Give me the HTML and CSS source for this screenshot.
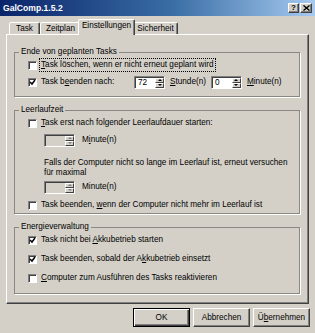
FILE: index.html
```html
<!DOCTYPE html>
<html lang="de">
<head>
<meta charset="utf-8">
<title>GalComp.1.5.2</title>
<link rel="stylesheet" href="styles.css">
</head>
<body>
<div class="dialog">
  <div class="titlebar">
    <span class="title">GalComp.1.5.2</span>
    <div class="tbtns">
      <span class="tbtn">?</span>
      <span class="tbtn close"><svg width="7" height="6" viewBox="0 0 7 6"><path d="M0.5 0.5 L6.5 5.5 M6.5 0.5 L0.5 5.5" stroke="#000" stroke-width="1.4"/></svg></span>
    </div>
  </div>
  <div class="tabs">
    <div class="tab t-task">Task</div>
    <div class="tab t-zeit">Zeitplan</div>
    <div class="tab active t-einst">Einstellungen</div>
    <div class="tab t-sich">Sicherheit</div>
  </div>
  <div class="panel">
    <fieldset class="group g1">
      <legend>Ende von geplanten Tasks</legend>
      <div class="row">
        <span class="cb"></span>
        <span class="focus"><u>T</u>ask löschen, wenn er nicht erneut geplant wird</span>
      </div>
      <div class="row r2">
        <span class="cb"><svg viewBox="0 0 7 7" width="7" height="7"><path d="M1 3 L3 5 L6 1" fill="none" stroke="#000" stroke-width="1.5"/></svg></span>
        <span class="lbl-w">Task b<u>e</u>enden nach:</span>
        <span class="spin"><span class="val">72</span><span class="arrows"><span><i class="up"></i></span><span><i class="down"></i></span></span></span>
        <span class="unit"><u>S</u>tunde(n)</span>
        <span class="spin"><span class="val">0</span><span class="arrows"><span><i class="up"></i></span><span><i class="down"></i></span></span></span>
        <span class="unit"><u>M</u>inute(n)</span>
      </div>
    </fieldset>

    <fieldset class="group g2">
      <legend>Leerlaufzeit</legend>
      <div class="row">
        <span class="cb"></span>
        <span><u>T</u>ask erst nach folgender Leerlaufdauer starten:</span>
      </div>
      <div class="row indent sp1">
        <span class="spin off"><span class="val"></span><span class="arrows"><span><i class="up"></i></span><span><i class="down"></i></span></span></span>
        <span class="unit2">M<u>i</u>nute(n)</span>
      </div>
      <p class="note">Falls der Computer nicht so lange im Leerlauf ist, erneut versuchen<br>für maximal</p>
      <div class="row indent sp2">
        <span class="spin off"><span class="val"></span><span class="arrows"><span><i class="up"></i></span><span><i class="down"></i></span></span></span>
        <span class="unit2">Minute(n)</span>
      </div>
      <div class="row r-last">
        <span class="cb"></span>
        <span>Task beenden, <u>w</u>enn der Computer nicht mehr im Leerlauf ist</span>
      </div>
    </fieldset>

    <fieldset class="group g3">
      <legend>Energieverwaltung</legend>
      <div class="row">
        <span class="cb"><svg viewBox="0 0 7 7" width="7" height="7"><path d="M1 3 L3 5 L6 1" fill="none" stroke="#000" stroke-width="1.5"/></svg></span>
        <span>Task nicht bei <u>A</u>kkubetrieb starten</span>
      </div>
      <div class="row r-b">
        <span class="cb"><svg viewBox="0 0 7 7" width="7" height="7"><path d="M1 3 L3 5 L6 1" fill="none" stroke="#000" stroke-width="1.5"/></svg></span>
        <span>Task beenden, sobald der A<u>k</u>kubetrieb einsetzt</span>
      </div>
      <div class="row r-c">
        <span class="cb"></span>
        <span><u>C</u>omputer zum Ausführen des Tasks reaktivieren</span>
      </div>
    </fieldset>
  </div>
  <div class="buttons">
    <div class="btn default">OK</div>
    <div class="btn">Abbrechen</div>
    <div class="btn">Ü<u>b</u>ernehmen</div>
  </div>
</div>
</body>
</html>
```

FILE: styles.css
```css
* { box-sizing: border-box; }
html, body { margin: 0; padding: 0; }
body {
  background: #d4d0c8;
  font-family: "Liberation Sans", Arial, sans-serif;
  font-size: 8.2px;
  line-height: 10px;
  color: #000;
}
u { text-underline-offset: 1px; }

.dialog {
  width: 315px;
  height: 333px;
  background: #d4d0c8;
  display: flex;
  flex-direction: column;
}

.titlebar {
  height: 16px;
  flex: none;
  background: linear-gradient(to right, #0a246a 0%, #3a6ea5 55%, #a6caf0 100%);
  display: flex;
  align-items: center;
  justify-content: space-between;
  padding: 0 3px 0 3px;
}
.title { color: #fff; font-weight: bold; font-size: 8.6px; }
.tbtns { display: flex; gap: 1px; }
.tbtn {
  width: 11px;
  height: 10px;
  background: #d4d0c8;
  border: 1px solid;
  border-color: #fff #404040 #404040 #fff;
  box-shadow: inset -1px -1px 0 #808080;
  display: flex;
  align-items: center;
  justify-content: center;
  font-size: 8px;
  font-weight: bold;
  line-height: 8px;
}
.tbtn.close { width: 12px; }

.tabs {
  height: 18px;
  flex: none;
  display: flex;
  align-items: flex-end;
  padding-left: 9px;
}
.tab {
  height: 12px;
  border: 1px solid;
  border-bottom: none;
  border-color: #fff #404040 transparent #fff;
  border-radius: 2px 2px 0 0;
  box-shadow: inset -1px 0 0 #808080;
  display: flex;
  align-items: center;
  justify-content: center;
  padding-top: 1px;
  background: #d4d0c8;
}
.t-task { width: 31px; }
.t-zeit { width: 40px; border-right: none; box-shadow: none; }
.t-einst { width: 57px; }
.t-sich { width: 45px; }
.tab.active {
  height: 16px;
  margin: 0 -2px -1px -2px;
  position: relative;
  z-index: 1;
  padding-top: 0;
  padding-bottom: 3px;
}

.panel {
  margin-left: 6px;
  width: 303px;
  height: 270px;
  flex: none;
  border: 1px solid;
  border-color: #fff #404040 #404040 #fff;
  box-shadow: inset -1px -1px 0 #808080;
  padding: 0 8px 0 7px;
  display: flex;
  flex-direction: column;
}

.group {
  margin: 0;
  min-width: 0;
  border: 1px solid #8a8883;
  box-shadow: 1px 1px 0 #fff;
  padding: 1px 0 7px 0;
}
.group legend {
  padding: 0 2px;
  margin-left: 4px;
  height: 10px;
  line-height: 10px;
}
.g1 { margin-top: 12px; }
.g2 { margin-top: 8px; padding-bottom: 1px; }
.g3 { margin-top: 8px; padding-bottom: 8px; }

.row {
  height: 14px;
  display: flex;
  align-items: center;
  padding-left: 13px;
}
.r2 { margin-top: 3px; }
.indent { padding-left: 29px; }
.sp1 { margin-top: 3px; }
.sp2 { margin-top: 2px; }
.r-last { margin-top: 4px; }
.r-b { margin-top: 5px; }
.r-c { margin-top: 5px; }

.note {
  margin: 11px 0 0 29px;
  line-height: 10px;
}

.cb {
  width: 9px;
  height: 9px;
  flex: none;
  background: #fff;
  border: 1px solid;
  border-color: #808080 #fff #fff #808080;
  box-shadow: inset 1px 1px 0 #404040;
  margin-right: 4px;
  display: flex;
  align-items: center;
  justify-content: center;
}
.cb svg { display: block; }

.focus {
  outline: 1px dotted #000;
  outline-offset: 1px;
}

.lbl-w { width: 93px; flex: none; }

.spin {
  width: 31px;
  height: 13px;
  flex: none;
  display: flex;
  border: 1px solid;
  border-color: #808080 #fff #fff #808080;
  box-shadow: inset 1px 1px 0 #404040;
  background: #fff;
  padding: 1px 0 0 1px;
}
.spin .val { flex: 1; padding-left: 2px; line-height: 10px; }
.spin .arrows { width: 9px; display: flex; flex-direction: column; }
.arrows > span {
  flex: 1;
  background: #d4d0c8;
  border: 1px solid;
  border-color: #fff #404040 #404040 #fff;
  display: flex;
  align-items: center;
  justify-content: center;
}
.arrows i { display: block; width: 0; height: 0; border-left: 2px solid transparent; border-right: 2px solid transparent; }
.arrows i.up { border-bottom: 2px solid #000; }
.arrows i.down { border-top: 2px solid #000; }
.spin.off { background: #d4d0c8; }
.spin.off .arrows i.up { border-bottom-color: #808080; }
.spin.off .arrows i.down { border-top-color: #808080; }

.unit { margin: 0 5px 0 5px; }
.unit2 { margin-left: 7px; }

.buttons {
  display: flex;
  justify-content: flex-end;
  gap: 3px;
  padding-right: 5px;
  margin-top: 4px;
}
.btn {
  width: 57px;
  height: 19px;
  border: 1px solid;
  border-color: #fff #404040 #404040 #fff;
  box-shadow: inset -1px -1px 0 #808080;
  display: flex;
  align-items: center;
  justify-content: center;
}
.btn.default {
  border-color: #000;
  box-shadow: inset 1px 1px 0 #fff, inset -1px -1px 0 #404040, inset -2px -2px 0 #808080;
}
```
